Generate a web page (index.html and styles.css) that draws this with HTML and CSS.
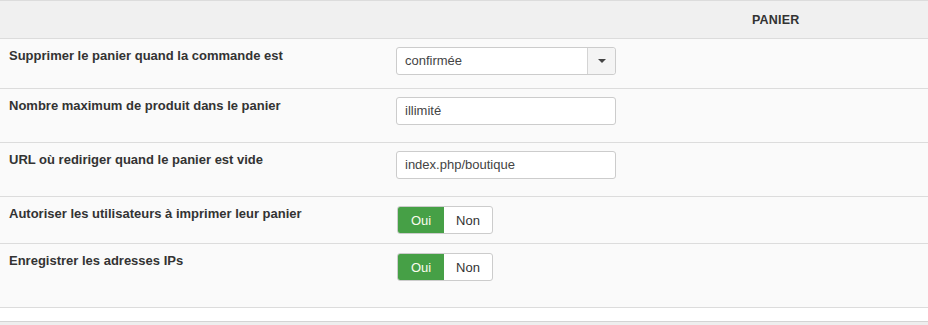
FILE: index.html
```html
<!DOCTYPE html>
<html lang="fr">
<head>
  <meta charset="UTF-8" />
  <meta name="viewport" content="width=device-width, initial-scale=1.0">
  <title>Panier</title>
  <link rel="stylesheet" href="styles.css">
</head>
<body>
  <div class="section-head">
    <span class="section-title">PANIER</span>
  </div>

  <div class="settings">
    <div class="row row-select">
      <div class="label">Supprimer le panier quand la commande est</div>
      <div class="control">
        <div class="select">
          <span class="select-value">confirmée</span>
          <span class="select-arrow"><span class="caret"></span></span>
        </div>
      </div>
    </div>

    <div class="row row-text">
      <div class="label">Nombre maximum de produit dans le panier</div>
      <div class="control">
        <div class="input">illimité</div>
      </div>
    </div>

    <div class="row row-text">
      <div class="label">URL où rediriger quand le panier est vide</div>
      <div class="control">
        <div class="input">index.php/boutique</div>
      </div>
    </div>

    <div class="row row-toggle">
      <div class="label">Autoriser les utilisateurs à imprimer leur panier</div>
      <div class="control">
        <div class="toggle">
          <span class="toggle-btn active">Oui</span>
          <span class="toggle-btn">Non</span>
        </div>
      </div>
    </div>

    <div class="row row-last">
      <div class="label">Enregistrer les adresses IPs</div>
      <div class="control">
        <div class="toggle">
          <span class="toggle-btn active">Oui</span>
          <span class="toggle-btn">Non</span>
        </div>
      </div>
    </div>
  </div>

  <div class="spacer"></div>
  <div class="page-foot"></div>
</body>
</html>
```

FILE: styles.css
```css
* {
  box-sizing: border-box;
}
body {
  font-family: 'Liberation Sans', Arial, sans-serif;
  font-size: 13px;
  color: #333;
  background: #eeeeee;
  margin: 0;
}
.section-head {
  height: 39px;
  background: #f0f0f0;
  border-top: 1px solid #dcdcdc;
  border-bottom: 1px solid #dcdcdc;
  display: flex;
  align-items: center;
  padding-left: 752px;
}
.section-title {
  font-size: 12.5px;
  font-weight: bold;
  color: #333;
  letter-spacing: 0.2px;
}
.settings {
  background: #fafafa;
}
.row {
  display: flex;
  border-bottom: 1px solid #dcdcdc;
}
.row-select { height: 50px; }
.row-text { height: 54px; }
.row-toggle { height: 47px; }
.row-last { height: 64px; }
.label {
  width: 396px;
  padding: 8px 0 0 9px;
  font-weight: bold;
  line-height: 17px;
}
.control {
  padding-top: 8px;
}
.row-toggle .control,
.row-last .control {
  padding-top: 9px;
  padding-left: 1px;
}
.input,
.select {
  width: 220px;
  height: 28px;
  background: #fff;
  border: 1px solid #cccccc;
  border-radius: 3px;
  line-height: 26px;
  color: #444;
}
.input {
  padding-left: 8px;
}
.select {
  display: flex;
}
.select-value {
  flex: 1;
  padding-left: 8px;
}
.select-arrow {
  width: 28px;
  border-left: 1px solid #d4d4d4;
  background: #f4f4f4;
  border-radius: 0 3px 3px 0;
  display: flex;
  align-items: center;
  justify-content: center;
}
.caret {
  width: 0;
  height: 0;
  border-left: 4px solid transparent;
  border-right: 4px solid transparent;
  border-top: 4px solid #444;
}
.toggle {
  display: inline-flex;
  height: 28px;
  border: 1px solid #cccccc;
  border-radius: 3px;
  overflow: hidden;
  background: #fff;
}
.toggle-btn {
  width: 48px;
  display: flex;
  align-items: center;
  justify-content: center;
  color: #333;
}
.toggle-btn.active {
  width: 46px;
  background: #46a046;
  color: #fbfbee;
}
.spacer {
  height: 14px;
  background: #fff;
  border-bottom: 1px solid #d4d4d4;
}
.page-foot {
  height: 10px;
}
```
